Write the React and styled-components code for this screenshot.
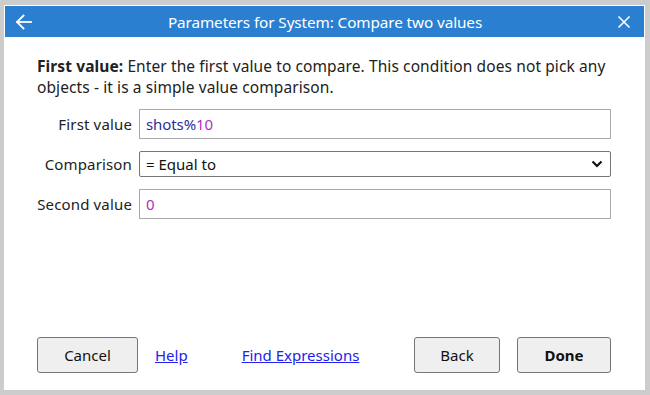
import React from "react";
import styled, { createGlobalStyle } from "styled-components";

const Global = createGlobalStyle`
  html, body { margin: 0; padding: 0; background: #cccccc; }
  body { font-family: "Noto Sans", "Open Sans", sans-serif; }
  * { box-sizing: border-box; }
`;

const Page = styled.div`
  width: 650px;
  height: 395px;
  padding: 5px 5px 5px 4px;
  background: #cccccc;
`;

const Dialog = styled.div`
  width: 641px;
  height: 385px;
  background: #ffffff;
  padding: 1px;
  display: flex;
  flex-direction: column;
`;

const Header = styled.div`
  height: 31px;
  background: #2b7fd0;
  color: #ffffff;
  display: flex;
  align-items: center;
  padding: 0 9px 0 8px;
`;

const IconButton = styled.div`
  width: 22px;
  height: 22px;
  display: flex;
  align-items: center;
  justify-content: center;
`;

const Title = styled.div`
  flex: 1;
  text-align: center;
  font-size: 15.3px;
  letter-spacing: -0.1px;
  padding-left: 2px;
`;

const Body = styled.div`
  flex: 1;
  display: flex;
  flex-direction: column;
  padding: 19px 33px 16px 32px;
  color: #222222;
`;

const Description = styled.p`
  margin: 0 0 11px 0;
  font-size: 15.5px;
  line-height: 21px;
  letter-spacing: 0.1px;
  white-space: nowrap;
`;

const Form = styled.div`
  display: grid;
  grid-template-columns: 95px 1fr;
  column-gap: 7px;
  row-gap: 12px;
  align-items: center;
`;

const Label = styled.label`
  font-size: 15px;
  text-align: right;
  white-space: nowrap;
  letter-spacing: 0.15px;
`;

const TextBox = styled.div`
  height: 30px;
  border: 1px solid #a9a9a9;
  display: flex;
  align-items: center;
  padding: 0 6px;
  font-size: 15px;
  letter-spacing: -0.1px;
`;

const Token = styled.span`
  color: ${(p) => (p.$kind === "num" ? "#b02fc0" : "#2e2e96")};
`;

const SelectBox = styled.div`
  height: 26px;
  border: 1px solid #767676;
  border-radius: 2px;
  display: flex;
  align-items: center;
  justify-content: space-between;
  padding: 0 7px 0 6px;
  font-size: 15px;
  color: #111;
`;

const Footer = styled.div`
  margin-top: auto;
  display: flex;
  align-items: center;
`;

const Button = styled.button`
  height: 36px;
  width: ${(p) => p.$w}px;
  margin-left: ${(p) => p.$ml || 0}px;
  background: #efefef;
  border: 1px solid #767676;
  border-radius: 3px;
  font-family: "Noto Sans", "Open Sans", sans-serif;
  font-size: 15px;
  font-weight: ${(p) => (p.$bold ? 700 : 400)};
  color: #111;
  padding: 0;
`;

const Link = styled.a`
  margin-left: ${(p) => p.$ml}px;
  color: #2222ee;
  text-decoration: underline;
  font-size: 15px;
  letter-spacing: 0px;
  cursor: pointer;
`;

const Spacer = styled.div`
  flex: 1;
`;

export default function App() {
  return (
    <>
      <Global />
      <Page>
        <Dialog>
          <Header>
            <IconButton>
              <svg width="20" height="20" viewBox="0 0 20 20" fill="none" stroke="#fff" strokeWidth="1.8" strokeLinecap="square">
                <path d="M3 10 H17" />
                <path d="M9.5 3.5 L3 10 L9.5 16.5" />
              </svg>
            </IconButton>
            <Title>Parameters for System: Compare two values</Title>
            <IconButton>
              <svg width="14" height="14" viewBox="0 0 14 14" fill="none" stroke="#fff" strokeWidth="1.6">
                <path d="M1.5 1.5 L12.5 12.5 M12.5 1.5 L1.5 12.5" />
              </svg>
            </IconButton>
          </Header>
          <Body>
            <Description>
              <b>First value:</b> Enter the first value to compare. This condition does not pick any
              <br />
              objects - it is a simple value comparison.
            </Description>
            <Form>
              <Label>First value</Label>
              <TextBox>
                <Token>shots%</Token>
                <Token $kind="num">10</Token>
              </TextBox>
              <Label>Comparison</Label>
              <SelectBox>
                <span>= Equal to</span>
                <svg width="12" height="8" viewBox="0 0 12 8" fill="none" stroke="#111" strokeWidth="2.2">
                  <path d="M1.5 1.5 L6 6 L10.5 1.5" />
                </svg>
              </SelectBox>
              <Label>Second value</Label>
              <TextBox>
                <Token $kind="num">0</Token>
              </TextBox>
            </Form>
            <Footer>
              <Button $w={101}>Cancel</Button>
              <Link $ml={17}>Help</Link>
              <Link $ml={54}>Find Expressions</Link>
              <Spacer />
              <Button $w={86}>Back</Button>
              <Button $w={94} $ml={17} $bold>Done</Button>
            </Footer>
          </Body>
        </Dialog>
      </Page>
    </>
  );
}
